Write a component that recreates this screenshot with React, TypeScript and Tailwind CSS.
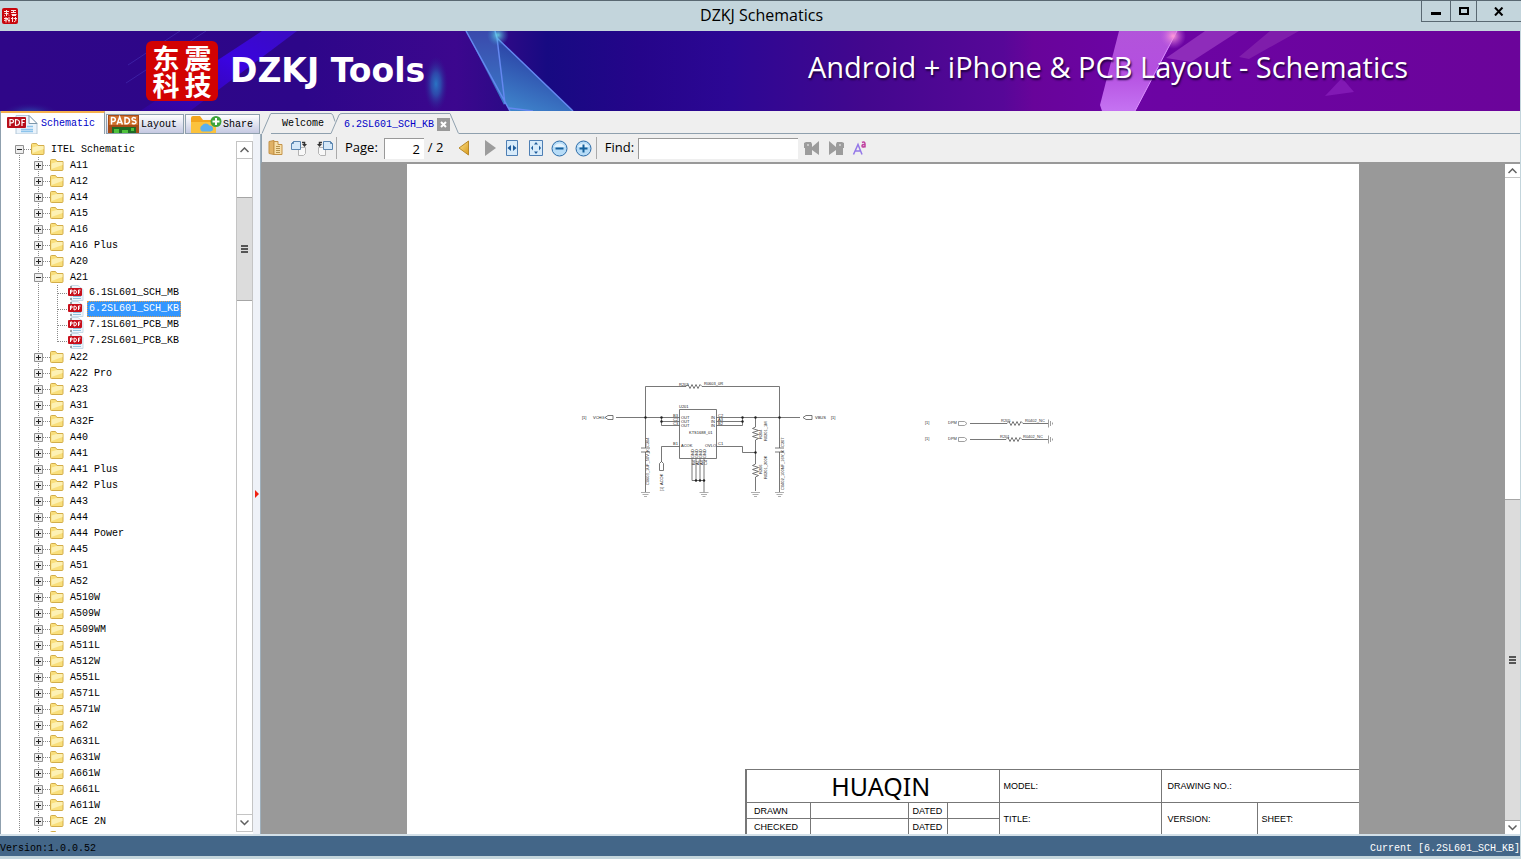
import { useState } from "react";
import type { ReactNode } from "react";

const foldersBefore = ["A11", "A12", "A14", "A15", "A16", "A16 Plus", "A20"];
const files = [
  "6.1SL601_SCH_MB",
  "6.2SL601_SCH_KB",
  "7.1SL601_PCB_MB",
  "7.2SL601_PCB_KB",
];
const foldersAfter = [
  "A22",
  "A22 Pro",
  "A23",
  "A31",
  "A32F",
  "A40",
  "A41",
  "A41 Plus",
  "A42 Plus",
  "A43",
  "A44",
  "A44 Power",
  "A45",
  "A51",
  "A52",
  "A510W",
  "A509W",
  "A509WM",
  "A511L",
  "A512W",
  "A551L",
  "A571L",
  "A571W",
  "A62",
  "A631L",
  "A631W",
  "A661W",
  "A661L",
  "A611W",
  "ACE 2N",
  "",
];

export default function App() {
  const [selected, setSelected] = useState("6.2SL601_SCH_KB");

  return (
    <div className="flex h-screen flex-col overflow-hidden bg-[#c3d5dc] font-['Liberation_Mono',monospace] text-[10px] text-black">
      <TitleBar />
      <div className="flex min-h-0 flex-1 flex-col pr-px">
        <Banner />
        <div className="flex min-h-0 flex-1 bg-[#efefef]">
          <Sidebar selected={selected} onSelect={setSelected} />
          <main className="flex min-w-0 flex-1 flex-col">
            <DocTabs name={selected} />
            <Toolbar />
            <Viewer />
          </main>
        </div>
        <footer className="flex h-[22px] shrink-0 items-center justify-between border-t-2 border-[#d3e0e8] bg-[#436688] pt-1">
          <span>Version:1.0.0.52</span>
          <span className="text-white">Current [{selected}]</span>
        </footer>
      </div>
      <div className="h-[3px] shrink-0" />
    </div>
  );
}

function TitleBar() {
  return (
    <header className="flex h-[31px] shrink-0 border-t border-[#596872]">
      <div className="flex flex-1 items-center pl-0.5">
        <Seal small />
      </div>
      <h1 className="pt-1 font-['Open_Sans',sans-serif] text-[16px] leading-5">
        DZKJ Schematics
      </h1>
      <div className="flex flex-1 items-start justify-end">
        <div className="flex h-[21px] border-b border-l border-[#596872]">
          <button aria-label="Minimize" className="flex w-7 items-center justify-center">
            <svg width="10" height="10" className="block">
              <path d="M0 6h10v3H0z" />
            </svg>
          </button>
          <button
            aria-label="Maximize"
            className="flex w-[27px] items-center justify-center border-x border-[#596872]"
          >
            <svg width="10" height="8" fill="none" stroke="#000">
              <path d="M1 1h8v6H1z" strokeWidth="2" />
            </svg>
          </button>
          <button aria-label="Close" className="flex w-11 items-center justify-center">
            <svg width="10" height="9" fill="none" stroke="#000" strokeWidth="2">
              <path d="M1 .5l7.500 8M8.500.5L1 8.500" />
            </svg>
          </button>
        </div>
      </div>
    </header>
  );
}

function Seal({ small }: { small?: boolean }) {
  if (small) {
    return (
      <svg width="16" height="16" viewBox="0 0 16 16">
        <rect width="16" height="16" rx="2" fill="#c8050c" />
        <path
          d="M2 3.500h5M4.500 2v6M2.500 5.500h4M3 7.500l-1 .5M6 6.500l1 1M9 2.500h5M9 4.500h5M9.500 6.500h5M11.500 2v3M10 7.500h4M2 10.500h4M4 9v5.500M2 12.500l4-1M7 9v5.500M6 12.500h2M9 10.500h2.500M10.500 9v5M12 10.500h3M13.500 9v3M12 14l2.500-2"
          fill="none"
          stroke="#ffe6e6"
          strokeWidth="1"
        />
      </svg>
    );
  }
  return (
    <div className="grid h-[60px] w-[72px] grid-cols-2 content-center justify-items-center rounded-md bg-[#d20202] px-1 font-['Noto_Sans_CJK_SC',sans-serif] text-[27px] leading-[27px] font-bold">
      <span>东</span>
      <span>震</span>
      <span>科</span>
      <span>技</span>
    </div>
  );
}

function Banner() {
  return (
    <div className="relative h-20 shrink-0 overflow-hidden">
      <svg
        className="absolute inset-0 size-full"
        viewBox="0 0 1520 80"
        preserveAspectRatio="none"
      >
        <defs>
          <linearGradient id="bg">
            <stop offset="0" stopColor="#2f0688" />
            <stop offset=".2" stopColor="#2d0689" />
            <stop offset=".3" stopColor="#3c078e" />
            <stop offset=".335" stopColor="#2b0a86" />
            <stop offset=".36" stopColor="#170a82" />
            <stop offset=".42" stopColor="#25058a" />
            <stop offset=".48" stopColor="#2c0794" />
            <stop offset=".57" stopColor="#43078e" />
            <stop offset=".66" stopColor="#570798" />
            <stop offset=".68" stopColor="#68049a" />
            <stop offset=".74" stopColor="#6c04a4" />
            <stop offset="1" stopColor="#6b049a" />
          </linearGradient>
          <linearGradient id="streak" x1="1" y1="0" x2="0" y2="1">
            <stop offset="0" stopColor="#3a0cc0" />
            <stop offset=".4" stopColor="#3a04e0" />
            <stop offset="1" stopColor="#3a04c0" stopOpacity=".3" />
          </linearGradient>
          <linearGradient id="shard" x1="0" y1="0" x2="0" y2="1">
            <stop offset="0" stopColor="#3a49ac" />
            <stop offset="1" stopColor="#3a7bc8" />
          </linearGradient>
          <linearGradient id="shard2" x1="0.600" y1="0" x2="0.200" y2="1">
            <stop offset="0" stopColor="#26309c" />
            <stop offset="1" stopColor="#3f86cc" />
          </linearGradient>
          <linearGradient id="pink" x1="0" y1="0" x2="0" y2="1">
            <stop offset="0" stopColor="#b254da" />
            <stop offset=".5" stopColor="#b44fe0" />
            <stop offset="1" stopColor="#c573f2" />
          </linearGradient>
          <radialGradient id="glow">
            <stop offset="0" stopColor="#2a74c4" />
            <stop offset=".4" stopColor="#2b58b2" stopOpacity=".8" />
            <stop offset="1" stopColor="#2f188e" stopOpacity="0" />
          </radialGradient>
          <radialGradient id="spark">
            <stop offset="0" stopColor="#6ff0f0" />
            <stop offset="1" stopColor="#3a90d0" stopOpacity="0" />
          </radialGradient>
          <radialGradient id="pinkSpark">
            <stop offset="0" stopColor="#ff9ad8" />
            <stop offset="1" stopColor="#c060e0" stopOpacity="0" />
          </radialGradient>
        </defs>
        <rect width="1520" height="80" fill="url(#bg)" />
        <path d="M262 0h35L190 80h-50z" fill="url(#streak)" />
        <path d="M206 0L126 52M180 0l-52 34" stroke="#4a3ac0" strokeOpacity=".5" />
        <ellipse cx="30" cy="82" rx="28" ry="10" fill="url(#glow)" opacity=".5" />
        <ellipse cx="436" cy="53" rx="12" ry="28" fill="url(#glow)" />
        <path d="M466 0h30l9 72-1 2z" fill="url(#shard)" />
        <path d="M497 7l76 73h-63l-5-8z" fill="url(#shard2)" />
        <path
          d="M466 0l44 80M495 0l2 7 8 66M497 7l76 73M509 77l24 3"
          fill="none"
          stroke="#6488f0"
          strokeWidth="1.500"
        />
        <circle cx="498" cy="4" r="11" fill="url(#spark)" opacity=".8" />
        <path d="M1119 0h58l-42 80h-33l-2-6z" fill="url(#pink)" />
        <path d="M1205 0h34l-48 31-25-4z" fill="#9a3ac2" opacity=".75" />
        <path d="M1270 0h29l-50 28-10-2z" fill="#8524ae" opacity=".8" />
        <path d="M1342 47l12 14-29 4z" fill="#8119b4" />
        <path d="M1177 0l-42 80" stroke="#dc90ff" />
        <circle cx="1173" cy="5" r="13" fill="url(#pinkSpark)" />
      </svg>
      <div className="relative flex h-full items-center pr-28 pl-[146px] font-['Open_Sans',sans-serif] text-white">
        <Seal />
        <div className="pl-3 font-['DejaVu_Sans',sans-serif] text-[33px] leading-10 font-bold">
          DZKJ Tools
        </div>
        <div className="ml-auto pb-2 text-[29px] leading-9 whitespace-nowrap [text-shadow:1px_2px_2px_#200040]">
          Android + iPhone &amp; PCB Layout - Schematics
        </div>
      </div>
    </div>
  );
}

function Sidebar({
  selected,
  onSelect,
}: {
  selected: string;
  onSelect: (name: string) => void;
}) {
  return (
    <aside className="flex w-[261px] shrink-0 flex-col border-l border-[#8fa0ae]">
      <nav className="flex h-[23px] shrink-0 items-end gap-px">
        <button className="flex h-full w-[104px] items-center gap-[3px] border-t-2 border-r border-t-[#f5b04c] border-r-[#8fa0ae] bg-white pl-1.5 text-[#0000c8]">
          <PdfTabIcon />
          Schematic
        </button>
        <button className="flex h-5 w-[78px] items-center gap-0.5 border border-[#8fa0ae] bg-gradient-to-b from-white to-[#c5c9e2] pl-px">
          <PadsIcon />
          Layout
        </button>
        <button className="flex h-5 w-[75px] items-center gap-px border border-[#8fa0ae] bg-gradient-to-b from-white to-[#c5c9e2] pl-1">
          <ShareIcon />
          Share
        </button>
      </nav>
      <div className="flex min-h-0 flex-1 bg-white">
        <div className="mt-[7px] mb-0.5 min-w-0 flex-1 overflow-hidden pl-[9px]">
          <ul>
            <li>
              <Row root depth={0} open name="ITEL Schematic" />
              <ul>
                {foldersBefore.map((name) => (
                  <li key={name}>
                    <Row depth={1} name={name} />
                  </li>
                ))}
                <li>
                  <Row depth={1} open name="A21" />
                  <ul>
                    {files.map((name, i) => (
                      <li key={name} className="flex h-4 items-center">
                        <Line />
                        <Line />
                        <Branch last={i === files.length - 1} />
                        <PdfFileIcon />
                        <button
                          onClick={() => onSelect(name)}
                          className={
                            name === selected
                              ? "ml-[3px] h-4 border border-dotted border-[#e0a050] bg-[#3296ff] px-px leading-[14px] text-white"
                              : "ml-[3px] h-4 border border-transparent px-px leading-[14px]"
                          }
                        >
                          {name}
                        </button>
                      </li>
                    ))}
                  </ul>
                </li>
                {foldersAfter.map((name) => (
                  <li key={name}>
                    <Row depth={1} name={name} />
                  </li>
                ))}
              </ul>
            </li>
          </ul>
        </div>
        <div className="mt-[7px] mb-0.5 flex w-[17px] shrink-0 flex-col border border-[#c4c4c4]">
          <ScrollButton />
          <div className="h-[39px] border-t border-[#c4c4c4]" />
          <Thumb className="h-[104px]" />
          <div className="flex-1 border-b border-[#c4c4c4]" />
          <ScrollButton down />
        </div>
        <div className="flex w-2 items-center border-r border-[#9fb0bc] bg-[#eff2f8]">
          <svg width="6" height="8" className="mt-5 ml-px shrink-0">
            <path d="M1 0l4 4-4 4z" fill="#f02010" />
          </svg>
        </div>
      </div>
    </aside>
  );
}

function Row({
  name,
  depth,
  open,
  root,
}: {
  name: string;
  depth: number;
  open?: boolean;
  root?: boolean;
}) {
  return (
    <div className="flex h-4 items-center">
      {depth > 0 && <Line />}
      <button aria-label={open ? "Collapse" : "Expand"} className="shrink-0">
        <svg width="21" height="16" className="block" fill="none" stroke="#8a8a8a">
          <path
            d={root ? "M9.500 8v8" : "M9.500 0v16"}
            strokeDasharray="1 1"
          />
          <path d="M14 8.500h7" strokeDasharray="1 1" />
          <path d="M5.500 4.500h8v8h-8z" fill="#eee" stroke="#929292" />
          <path d={open ? "M7 8.500h5" : "M7 8.500h5M9.500 6v5"} stroke="#222" />
        </svg>
      </button>
      <FolderIcon />
      <span className="pl-1.5">{name}</span>
    </div>
  );
}

function Line() {
  return (
    <svg width="19" height="16" className="shrink-0" stroke="#8a8a8a">
      <path d="M9.500 0v16" strokeDasharray="1 1" />
    </svg>
  );
}

function Branch({ last }: { last: boolean }) {
  return (
    <svg width="19" height="16" className="shrink-0" stroke="#8a8a8a">
      <path d={last ? "M9.500 0v9" : "M9.500 0v16"} strokeDasharray="1 1" />
      <path d="M10 8.500h9" strokeDasharray="1 1" />
    </svg>
  );
}

function ScrollButton({ down, short }: { down?: boolean; short?: boolean }) {
  return (
    <button
      aria-label={down ? "Scroll down" : "Scroll up"}
      className={`flex w-full shrink-0 items-center justify-center bg-white ${short ? "h-[13px]" : "h-4"}`}
    >
      <svg width="9" height="6" fill="none" stroke="#606060" strokeWidth="1.500">
        <path d={down ? "M.5.5l4 4 4-4" : "M.5 5l4-4 4 4"} />
      </svg>
    </button>
  );
}

function Thumb({ className }: { className: string }) {
  return (
    <div
      className={`flex shrink-0 items-center justify-center border-y border-[#a6a6a6] bg-[#dcdcdc] ${className}`}
    >
      <svg width="7" height="8" fill="none" stroke="#555" strokeWidth="2">
        <path d="M0 1h7M0 4h7M0 7h7" />
      </svg>
    </div>
  );
}

function DocTabs({ name }: { name: string }) {
  return (
    <nav className="flex h-[23px] shrink-0 items-end">
      <svg width="10" height="21" className="shrink-0" fill="none" stroke="#8fa0ae">
        <path d="M1 20.500L9 2q.5-1.500 1-1.500" />
      </svg>
      <button className="h-[21px] border-y border-[#8fa0ae] pr-1 pl-[11px]">Welcome</button>
      <svg width="14" height="21" className="shrink-0" fill="none" stroke="#8fa0ae">
        <path d="M0 .5h3q1.500.5 2 2l2 6M0 20.500h3L11 2q.5-1.500 3-1.500" />
      </svg>
      <button className="h-[21px] border-t border-[#8fa0ae] pl-0.5 text-[#0000c8]">
        {name}
      </button>
      <button
        aria-label="Close tab"
        className="flex h-[21px] items-center border-t border-[#8fa0ae] pr-0 pl-[3px]"
      >
        <svg width="13" height="13" fill="none" stroke="#fff" strokeWidth="2">
          <path d="M0 0h13v13H0z" fill="#999" stroke="none" />
          <path d="M4 4l5 5M9 4L4 9" />
        </svg>
      </button>
      <svg width="9" height="21" className="shrink-0" fill="none" stroke="#8fa0ae">
        <path d="M0 .5L8.500 20.500" />
      </svg>
      <div className="flex-1 border-b border-[#8fa0ae]" />
    </nav>
  );
}

function ToolButton({ label, children }: { label: string; children: ReactNode }) {
  return (
    <button
      aria-label={label}
      className="flex size-6 shrink-0 items-center justify-center"
    >
      {children}
    </button>
  );
}

function Toolbar() {
  return (
    <div className="flex h-[30px] shrink-0 items-center border-b-2 border-l border-b-[#999] border-l-[#8fa0ae] pl-0.5 font-['Open_Sans',sans-serif] text-[13px]">
      <ToolButton label="Open">
        <svg width="16" height="16" fill="none">
          <path d="M1 1.500l5-1v14l-5-1z" fill="#e0b266" stroke="#c49348" />
          <path d="M6 1.500h4v3h4v10H6z" fill="#f7dfa8" stroke="#c49348" />
          <path d="M8 6.500h4M8 8.500h4M8 10.500h4M8 12.500h4" stroke="#b4924e" />
        </svg>
      </ToolButton>
      <ToolButton label="Rotate right">
        <RotateIcon />
      </ToolButton>
      <ToolButton label="Rotate left">
        <span className="-scale-x-100">
          <RotateIcon />
        </span>
      </ToolButton>
      <div className="h-[22px] w-px bg-[#aaa]" />
      <label htmlFor="page" className="pr-1.5 pl-2">
        Page:
      </label>
      <input
        id="page"
        defaultValue="2"
        className="h-[21px] w-10 border-t border-l border-[#999] bg-white pr-1 text-right outline-none"
      />
      <span className="w-7 pl-1 whitespace-nowrap">/ 2</span>
      <ToolButton label="Previous page">
        <svg width="12" height="16">
          <defs>
            <linearGradient id="gold" x1="0" y1="0" x2="1" y2="1">
              <stop offset="0" stopColor="#fbe28c" />
              <stop offset="1" stopColor="#d99a1c" />
            </linearGradient>
          </defs>
          <path d="M10.500 1v14L1 8z" fill="url(#gold)" stroke="#b98a2a" />
        </svg>
      </ToolButton>
      <ToolButton label="Next page">
        <svg width="12" height="16" className="ml-1">
          <path d="M1 0v16L12 8z" fill="#9c9c9c" />
        </svg>
      </ToolButton>
      <ToolButton label="Fit width">
        <svg width="14" height="16" fill="none">
          <path d="M1.500.5h11v15h-11z" fill="#d8ebfa" stroke="#4e7fb4" />
          <path d="M6 5v6L2.500 8zM8 5v6l3.500-3z" fill="#1e5c9c" />
        </svg>
      </ToolButton>
      <ToolButton label="Fit page">
        <svg width="14" height="16" fill="none">
          <path d="M.5.5h13v15H.5z" fill="#d8ebfa" stroke="#4e7fb4" />
          <path
            d="M7 2l2 2.500H5zM7 14l2-2.500H5zM2 8l2-2.500v5zM12 8l-2-2.500v5z"
            fill="#1e5c9c"
          />
        </svg>
      </ToolButton>
      <ToolButton label="Zoom out">
        <ZoomIcon />
      </ToolButton>
      <ToolButton label="Zoom in">
        <ZoomIcon plus />
      </ToolButton>
      <div className="h-[22px] w-px bg-[#aaa]" />
      <label htmlFor="find" className="pr-1 pl-2">
        Find:
      </label>
      <input
        id="find"
        className="mr-0.5 h-[21px] w-40 border-t border-l border-[#999] bg-white outline-none"
      />
      <ToolButton label="Find previous">
        <FindIcon />
      </ToolButton>
      <ToolButton label="Find next">
        <span className="-scale-x-100">
          <FindIcon />
        </span>
      </ToolButton>
      <ToolButton label="Match case">
        <svg width="16" height="16" fill="none">
          <path d="M1.500 14.500L6 4.500l4 10M3.500 11h5" stroke="#9478e8" strokeWidth="1.500" />
          <path
            d="M10 2.500q3-1.500 3 1.500v3.500M13 4.500q-3-.3-3 1.500t3 .5"
            stroke="#c040a0"
            strokeWidth="1.500"
          />
        </svg>
      </ToolButton>
    </div>
  );
}

function RotateIcon() {
  return (
    <svg width="18" height="17" fill="none">
      <path d="M7.500 7.500h7v6l-2 2h-5z" fill="#f8f8f8" stroke="#b4b4b4" />
      <path d="M.5 3.500l2-2h7v8h-9z" fill="#d5e8f8" stroke="#5b86b0" />
      <path d="M.5 3.500h2v-2" stroke="#5b86b0" />
      <path d="M11 2.500h2.500v2" stroke="#333" strokeWidth="1.500" />
      <path d="M11 4h5l-2.500 3z" fill="#333" />
    </svg>
  );
}

function ZoomIcon({ plus }: { plus?: boolean }) {
  return (
    <svg width="17" height="17" fill="none">
      <circle cx="8.500" cy="8.500" r="7.500" fill="#b7dcf7" stroke="#2c6ca8" />
      <path d="M3 7a6 6 0 0 1 11 0z" fill="#e4f3fd" />
      <path
        d={plus ? "M4.500 8.500h8M8.500 4.500v8" : "M4.500 8.500h8"}
        stroke="#14609c"
        strokeWidth="2"
      />
    </svg>
  );
}

function FindIcon() {
  return (
    <svg width="16" height="16" fill="#9c9c9c">
      <path d="M0 3l2-1h5l1 2v3l7-6v14l-7-5v5H1V8H0z" />
      <path d="M3 4h2v2H3z" fill="#c8c8c8" />
    </svg>
  );
}

function Viewer() {
  return (
    <section className="flex min-h-0 flex-1">
      <div className="flex min-w-0 flex-1 justify-center overflow-hidden bg-[#999]">
        <div className="flex w-[952px] shrink-0 flex-col bg-white">
          <Schematic />
          <TitleBlock />
        </div>
      </div>
      <div className="flex w-[15px] shrink-0 flex-col bg-white">
        <ScrollButton short />
        <div className="flex-1 border-t border-[#c4c4c4]" />
        <Thumb className="h-[322px]" />
        <ScrollButton short down />
      </div>
    </section>
  );
}

const nodes = [
  [75.5, 47.5],
  [91.5, 47.5],
  [91.5, 51.5],
  [172.5, 47.5],
  [172.5, 51.5],
  [185.5, 47.5],
  [209.5, 47.5],
  [185.5, 82.5],
  [126, 110.5],
  [130, 110.5],
  [134, 110.5],
];

function Schematic() {
  return (
    <svg
      width="952"
      height="605"
      className="block shrink-0 font-['Liberation_Sans',sans-serif] text-[4px]"
      fill="none"
      stroke="#555"
      strokeWidth=".8"
    >
      <g transform="translate(163 206)">
        {/* wires and chip */}
        <path d="M75.500 78V16.500H116l2-2 2 4 2-4 2 4 2-4 2 4 2-4 2 2h77.500V78" />
        <path d="M46 47.500h63.500M91.500 47.500v8h18M91.500 51.500h18M146.500 47.500H230M172.500 47.500v8h-26M172.500 51.500h-26" />
        <path d="M109.500 39.500h37v49h-37z" />
        <path d="M109.500 76.500h-18V92M146.500 76.500h26v6h13" />
        <path d="M122 88.500v22h12M126 88.500v22M130 88.500v22M134 88.500v34" />
        {/* capacitors */}
        <path d="M71 78h9M71 82h9M75.500 82v40M205 78h9M205 82h9M209.500 82v40" />
        {/* resistors */}
        <path d="M185.500 47.500V57l-3 1.500 6 2-6 2 6 2-6 2 6 2-3 1.500v24l-3 1.500 6 2-6 2 6 2-6 2 6 2-3 1.500v14" />
        {/* grounds */}
        {[75.5, 134, 185.5, 209.5].map((x) => (
          <path
            key={x}
            transform={`translate(${x} 122)`}
            stroke="#999"
            d="M-4.500.5h9M-3 2.500h6M-1.500 4.500h3"
          />
        ))}
        {/* ports */}
        <path d="M35 47.500l3-2h5v4h-5zM233 47.500l3-2h6v4h-6zM89.500 93.500l2-2 2 2v7h-4z" />
        <g fill="#222" stroke="none">
          {nodes.map(([x, y]) => (
            <circle key={`${x}-${y}`} cx={x} cy={y} r="1.200" />
          ))}
          <text x="12" y="49">[1]</text>
          <text x="23" y="49">VCHG</text>
          <text x="245" y="49">VBUS</text>
          <text x="261" y="49">[1]</text>
          <text x="109" y="16">R202</text>
          <text x="134" y="15">R0603_0R</text>
          <text x="109" y="38">U201</text>
          <text x="111" y="49">OUT</text>
          <text x="111" y="53">OUT</text>
          <text x="111" y="57">OUT</text>
          <text x="141" y="49">IN</text>
          <text x="141" y="53">IN</text>
          <text x="141" y="57">IN</text>
          <text x="103" y="47">B3</text>
          <text x="103" y="51">C2</text>
          <text x="103" y="55">C3</text>
          <text x="148" y="47">C2</text>
          <text x="148" y="51">A3</text>
          <text x="148" y="55">B2</text>
          <text x="119" y="64">KTS1688_01</text>
          <text x="103" y="75">B1</text>
          <text x="111" y="77">ACOK</text>
          <text x="135" y="77">OVLO</text>
          <text x="148" y="75">C1</text>
          {[124, 128, 132, 136].map((x, i) => (
            <g key={x}>
              <text transform={`translate(${x} 88) rotate(-90)`}>GND</text>
              <text transform={`translate(${x + 1} 95) rotate(-90)`}>
                {["B4", "A1", "A4", "C4"][i]}
              </text>
            </g>
          ))}
          <text transform="translate(79 77) rotate(-90)">C204</text>
          <text transform="translate(79 115) rotate(-90)">C0603_1UF_50V_K</text>
          <text transform="translate(93 115) rotate(-90)">ACOK</text>
          <text transform="translate(93 121) rotate(-90)">[1]</text>
          <text transform="translate(192 69) rotate(-90)">R204</text>
          <text transform="translate(197 71) rotate(-90)">R0201_1M</text>
          <text transform="translate(192 104) rotate(-90)">R206</text>
          <text transform="translate(197 109) rotate(-90)">R0201_200K</text>
          <text transform="translate(214 77) rotate(-90)">C207</text>
          <text transform="translate(214 120) rotate(-90)">C0402_100NF_16V_K</text>
        </g>
      </g>
      <g transform="translate(493 236)">
        <path d="M58.500 21.500h6l2.500 2-2.500 2h-6zM58.500 37.500h6l2.500 2-2.500 2h-6z" stroke="#888" />
        <path d="M70 23.500h37l2-2 2 4 2-4 2 4 2-4 2 4 2-4 2 2h25M70 39.500h36l2-2 2 4 2-4 2 4 2-4 2 4 2-4 2 2h26" />
        <path d="M148.500 19.500v8M150.500 21v5M152.500 22.500v2M148.500 35.500v8M150.500 37v5M152.500 38.500v2" stroke="#888" />
        <g fill="#333" stroke="none">
          <text x="25" y="24">[1]</text>
          <text x="48" y="24">DPM</text>
          <text x="25" y="40">[1]</text>
          <text x="48" y="40">DPM</text>
          <text x="101" y="22">R205</text>
          <text x="125" y="22">R0402_NC</text>
          <text x="100" y="38">R201</text>
          <text x="123" y="38">R0402_NC</text>
        </g>
      </g>
    </svg>
  );
}

function TitleBlock() {
  return (
    <table className="ml-auto w-[614px] table-fixed border-collapse border-t border-l-2 border-[#777] font-['Liberation_Sans',sans-serif] text-[9px] leading-3 [&_td]:border-[#777] [&_td]:p-0">
      <colgroup>
        <col className="w-[64px]" />
        <col className="w-[98px]" />
        <col className="w-[39px]" />
        <col className="w-[52px]" />
        <col className="w-[162px]" />
        <col className="w-[96px]" />
        <col />
      </colgroup>
      <tbody>
        <tr className="h-[33px]">
          <td
            colSpan={4}
            className="border-r border-b text-center font-['Noto_Sans',sans-serif] text-[25px] leading-8"
          >
            <span className="pl-4">HUAQIN</span>
          </td>
          <td className="border-r border-b">
            <span className="pl-1">MODEL:</span>
          </td>
          <td colSpan={2} className="border-b">
            <span className="pl-1.5">DRAWING NO.:</span>
          </td>
        </tr>
        <tr className="h-4">
          <td className="border-r border-b">
            <span className="pl-[7px]">DRAWN</span>
          </td>
          <td className="border-r border-b" />
          <td className="border-r border-b">
            <span className="pl-1">DATED</span>
          </td>
          <td className="border-r border-b" />
          <td rowSpan={2} className="border-r">
            <span className="pl-1">TITLE:</span>
          </td>
          <td rowSpan={2} className="border-r">
            <span className="pl-1.5">VERSION:</span>
          </td>
          <td rowSpan={2}>
            <span className="pl-1">SHEET:</span>
          </td>
        </tr>
        <tr className="h-4">
          <td className="border-r">
            <span className="pl-[7px]">CHECKED</span>
          </td>
          <td className="border-r" />
          <td className="border-r">
            <span className="pl-1">DATED</span>
          </td>
          <td className="border-r" />
        </tr>
      </tbody>
    </table>
  );
}

function FolderIcon() {
  return (
    <svg width="14" height="12" className="shrink-0" fill="none">
      <path d="M.5 1.500q0-1 1-1h4l1.500 2h6v8q0 1-1 1h-10.500q-1 0-1-1z" fill="#f9df7c" stroke="#d3ad4a" />
      <path d="M1.500 4.500l5-1.500h6v3L1.500 10z" fill="#fdf1b4" />
    </svg>
  );
}

function PdfFileIcon() {
  return (
    <svg width="17" height="16" className="shrink-0" fill="none">
      <path d="M4 .5h7l5 4v11H4z" fill="#eef5fb" stroke="#c8dbe8" />
      <path d="M6 11.500h8M6 13.500h8" stroke="#8fc3e0" />
      <path d="M4 1v14" stroke="#555" strokeDasharray="2 2" />
      <rect x="1" y="3" width="14" height="8" rx="1" fill="#c8101c" />
      <path
        d="M3.500 9V5h1.500v2H3.500M7 9V5q2.500 0 2.500 2T7 9zM11.500 9V5h2M11.500 7h1.500"
        stroke="#fff"
      />
    </svg>
  );
}

function PdfTabIcon() {
  return (
    <svg width="31" height="19" className="mt-0.5 shrink-0" fill="none">
      <path d="M9 .5h13l8 8V19H9z" fill="#eaf3fb" stroke="#b4c8d8" />
      <path d="M22 .5v8h8z" fill="#fff" stroke="#7c98ac" />
      <path d="M14 14.500h12M14 16.500h12M20 11.500h6" stroke="#8cc4ec" strokeWidth="1.500" />
      <rect y="2" width="19" height="11" rx="1" fill="#b80e1a" />
      <path
        d="M3 11V4.500h1.500q2 0 2 1.700t-2 1.700H3M8.500 11V4.500q4 0 4 3t-4 3zM15 11V4.500h3M15 7.500h2.500"
        stroke="#fff"
        strokeWidth="1.200"
      />
    </svg>
  );
}

function PadsIcon() {
  return (
    <svg width="31" height="18" className="shrink-0" fill="none">
      <path d="M0 0h31v18H0z" fill="#a64c18" />
      <path d="M1 1h29v9H1z" fill="#d0702c" />
      <path d="M4 12h24v6H4z" fill="#1f6a24" />
      <path d="M6 14h5v4H6zM14 15h6v3h-6zM23 13h3v3h-3z" fill="#4fc23c" />
      <path
        d="M3.500 9.500V2.500h1.500q2.300 0 2.300 2t-2.300 2H3.500M9 9.500l2.700-7.500 2.700 7.500M10 7.500h3.500M17 8.800V2.500q4.500 0 4.500 3.200T17 8.800zM28 3.200q-4-1.500-4 .8 0 1.300 2 1.600t2 1.700q0 2.200-4.200.9"
        stroke="#fff"
        strokeWidth="1.500"
      />
    </svg>
  );
}

function ShareIcon() {
  return (
    <svg width="32" height="18" className="shrink-0" fill="none">
      <path d="M1 3q0-2 2-2h7l3 4h11q2 0 2 2v11H1z" fill="#f3a51c" />
      <path d="M1 7h25v11H1z" fill="#fbc23c" />
      <path d="M12 16.500a3.500 3.500 0 0 1 0-6 4.500 4.500 0 0 1 7.500 0 3 3 0 0 1 1 6z" fill="#5cb0ee" />
      <circle cx="26" cy="6.500" r="5.500" fill="#3ea43c" />
      <path d="M26 3v7M22.500 6.500h7" stroke="#fff" strokeWidth="2" />
    </svg>
  );
}
